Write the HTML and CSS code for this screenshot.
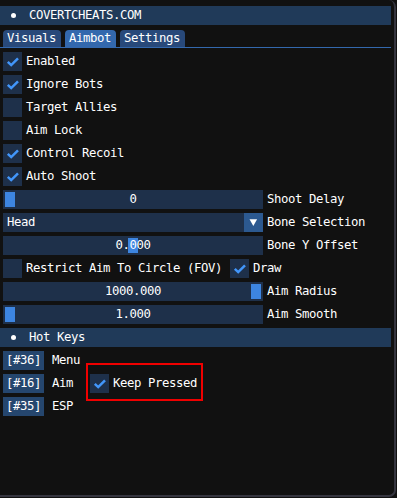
FILE: index.html
```html
<!DOCTYPE html>
<html>
<head>
<meta charset="utf-8">
<link rel="stylesheet" href="styles.css">
</head>
<body>
<div class="window">
  <div class="header"><span class="bullet"></span><span>COVERTCHEATS.COM</span></div>
  <div class="tabbar">
    <div class="tab">Visuals</div>
    <div class="tab active">Aimbot</div>
    <div class="tab">Settings</div>
  </div>
  <div class="content">
    <div class="row"><span class="check"><svg width="19" height="19" viewBox="0 0 19 19"><polyline points="4.8,9.8 8.2,13.1 15,6.3" fill="none" stroke="#4296fa" stroke-width="2.5"/></svg></span><span class="label">Enabled</span></div>
    <div class="row"><span class="check"><svg width="19" height="19" viewBox="0 0 19 19"><polyline points="4.8,9.8 8.2,13.1 15,6.3" fill="none" stroke="#4296fa" stroke-width="2.5"/></svg></span><span class="label">Ignore Bots</span></div>
    <div class="row"><span class="check"></span><span class="label">Target Allies</span></div>
    <div class="row"><span class="check"></span><span class="label">Aim Lock</span></div>
    <div class="row"><span class="check"><svg width="19" height="19" viewBox="0 0 19 19"><polyline points="4.8,9.8 8.2,13.1 15,6.3" fill="none" stroke="#4296fa" stroke-width="2.5"/></svg></span><span class="label">Control Recoil</span></div>
    <div class="row"><span class="check"><svg width="19" height="19" viewBox="0 0 19 19"><polyline points="4.8,9.8 8.2,13.1 15,6.3" fill="none" stroke="#4296fa" stroke-width="2.5"/></svg></span><span class="label">Auto Shoot</span></div>
    <div class="row"><div class="slider"><span class="grab" style="margin-left:0px"></span><span class="val">0</span></div><span class="label">Shoot Delay</span></div>
    <div class="row"><div class="combo"><span class="combo-text">Head</span><span class="combo-arrow"><svg width="19" height="19" viewBox="0 0 19 19"><polygon points="5.5,6.3 13.1,6.3 9.3,13" fill="#fff"/></svg></span></div><span class="label">Bone Selection</span></div>
    <div class="row"><div class="slider"><span class="grab" style="margin-left:123px"></span><span class="val">0.000</span></div><span class="label">Bone Y Offset</span></div>
    <div class="row"><span class="check"></span><span class="label">Restrict Aim To Circle (FOV)</span><span class="check spaced"><svg width="19" height="19" viewBox="0 0 19 19"><polyline points="4.8,9.8 8.2,13.1 15,6.3" fill="none" stroke="#4296fa" stroke-width="2.5"/></svg></span><span class="label">Draw</span></div>
    <div class="row"><div class="slider"><span class="grab" style="margin-left:246px"></span><span class="val">1000.000</span></div><span class="label">Aim Radius</span></div>
    <div class="row"><div class="slider"><span class="grab" style="margin-left:0px"></span><span class="val">1.000</span></div><span class="label">Aim Smooth</span></div>
    <div class="header section"><span class="bullet"></span><span>Hot Keys</span></div>
    <div class="row"><span class="btn">[#36]</span><span class="hk-label">Menu</span></div>
    <div class="row"><span class="btn">[#16]</span><span class="hk-label">Aim</span><span class="keep"><span class="check"><svg width="19" height="19" viewBox="0 0 19 19"><polyline points="4.8,9.8 8.2,13.1 15,6.3" fill="none" stroke="#4296fa" stroke-width="2.5"/></svg></span><span class="label">Keep Pressed</span><span class="annot"></span></span></div>
    <div class="row"><span class="btn">[#35]</span><span class="hk-label">ESP</span></div>
  </div>
</div>
</body>
</html>
```
FILE: styles.css
```css
* { box-sizing: border-box; margin: 0; padding: 0; }
html, body { background: #111111; }
body {
  font-family: "DejaVu Sans Mono", "Liberation Mono", monospace;
  font-size: 12.3px;
  letter-spacing: -0.405px;
  line-height: 19px;
  color: #ffffff;
  width: 397px;
  height: 498px;
  overflow: hidden;
}
.window {
  width: 396px;
  height: 497px;
  background: #111111;
  border-right: 2px solid #35353f;
  border-bottom: 2px solid #35353f;
  border-radius: 0 7px 7px 0;
  padding-top: 6px;
}
.header {
  display: flex;
  align-items: center;
  width: 391px;
  height: 19px;
  background: #203a59;
  white-space: pre;
}
.header.section { margin-left: -3px; }
.bullet {
  width: 5px;
  height: 5px;
  border-radius: 50%;
  background: #ffffff;
  margin-left: 11px;
  margin-right: 13px;
}
.tabbar {
  display: flex;
  gap: 4px;
  margin-top: 5px;
  padding-left: 3px;
  width: 391px;
  height: 18px;
  border-bottom: 1px solid #3368ad;
}
.tab {
  height: 17px;
  line-height: 17px;
  padding: 0 5px 0 4px;
  background: #28497a;
  border-radius: 4px 4px 0 0;
}
.tab.active { background: #3368ad; }
.content {
  display: flex;
  flex-direction: column;
  gap: 4px;
  margin-top: 4px;
  padding-left: 3px;
}
.row {
  display: flex;
  align-items: center;
  height: 19px;
  white-space: pre;
}
.check {
  display: block;
  width: 19px;
  height: 19px;
  background: #1e304a;
  flex: none;
}
.check svg { display: block; }
.check.spaced { margin-left: 8px; }
.label { margin-left: 4px; }
.slider {
  display: grid;
  width: 260px;
  height: 19px;
  padding: 2px;
  background: #1e304a;
  flex: none;
}
.grab {
  grid-area: 1 / 1;
  width: 10px;
  height: 15px;
  background: #3d85e0;
}
.val {
  grid-area: 1 / 1;
  text-align: center;
  line-height: 15px;
}
.combo {
  display: flex;
  width: 260px;
  height: 19px;
  background: #1e304a;
  flex: none;
}
.combo-text { flex: 1; padding-left: 4px; }
.combo-arrow {
  width: 19px;
  height: 19px;
  background: #2c5990;
}
.combo-arrow svg { display: block; }
.btn {
  width: 41px;
  height: 19px;
  background: #25466e;
  text-align: center;
  flex: none;
}
.hk-label {
  width: 38px;
  margin-left: 8px;
}
.keep {
  position: relative;
  display: flex;
  align-items: center;
}
.annot {
  position: absolute;
  left: -4px;
  top: -11px;
  width: 117px;
  height: 38px;
  border: 2px solid #f00000;
}
```
